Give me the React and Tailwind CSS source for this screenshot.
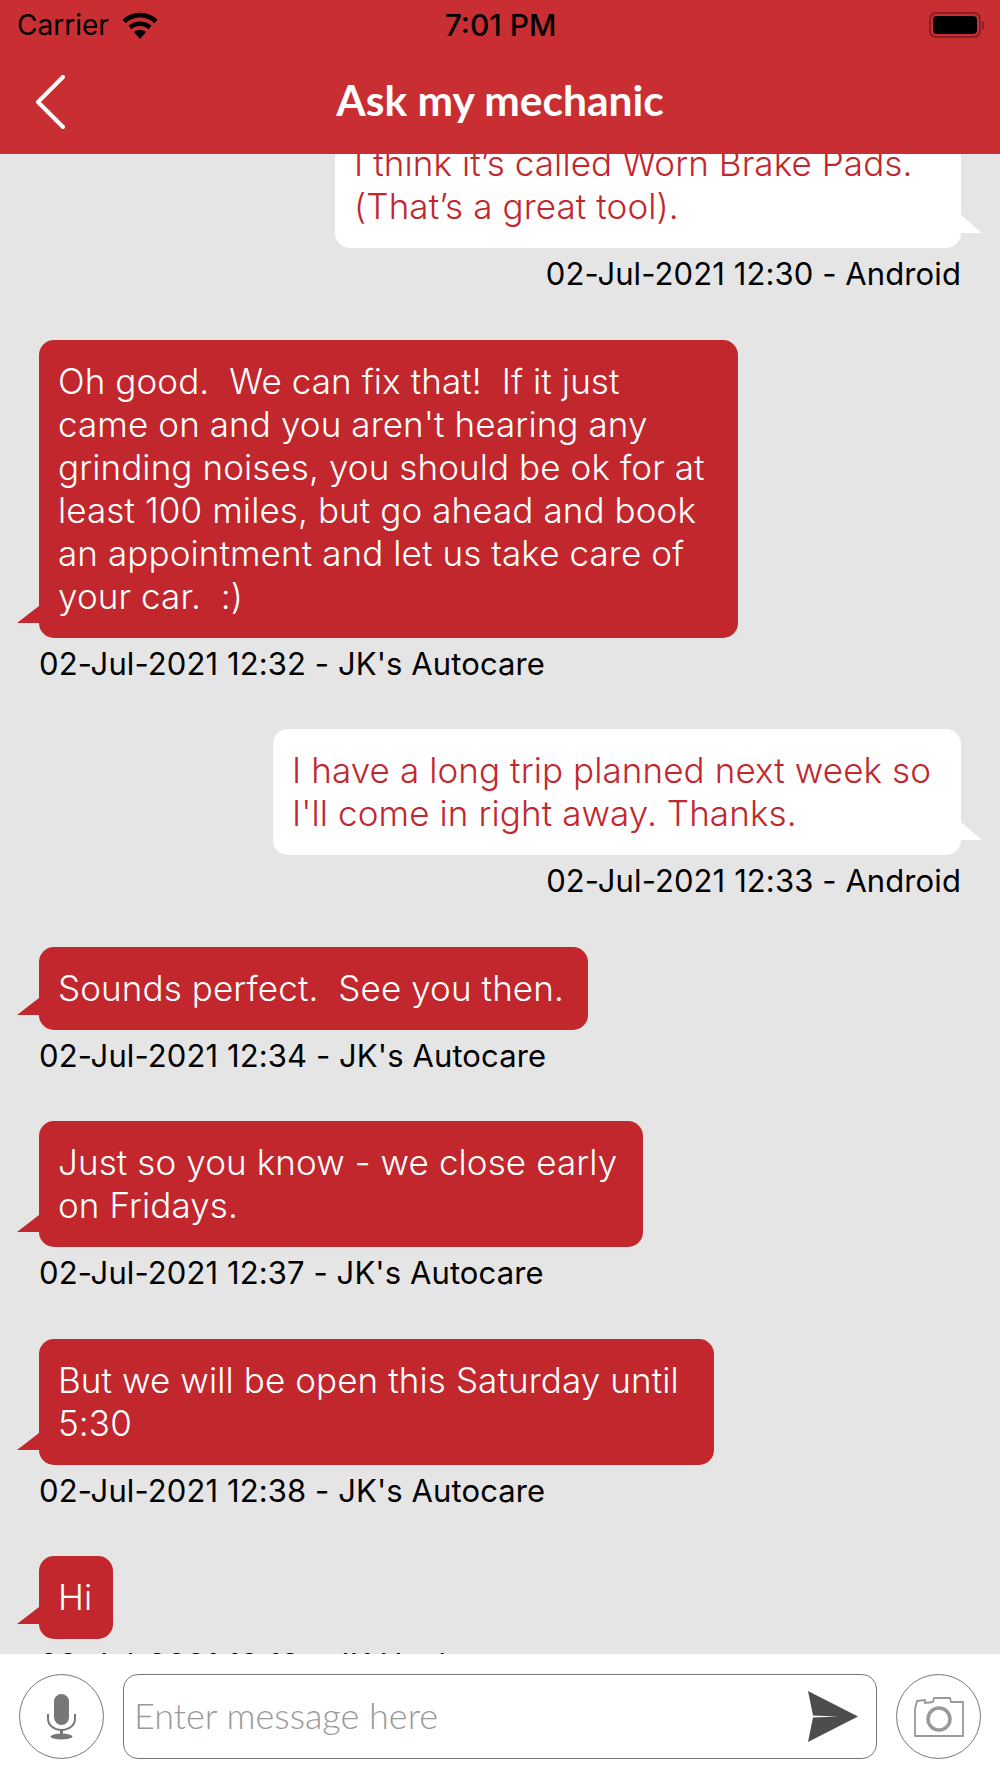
const MESSAGES = [
  { mine: true, width: 'w-[626px]', lines: ["I think it’s called Worn Brake Pads.", "(That’s a great tool)."], meta: '02-Jul-2021 12:30 - Android' },
  {
    width: 'w-[699px]',
    lines: [
      'Oh good.  We can fix that!  If it just',
      "came on and you aren't hearing any",
      'grinding noises, you should be ok for at',
      'least 100 miles, but go ahead and book',
      'an appointment and let us take care of',
      'your car.  :)',
    ],
    meta: "02-Jul-2021 12:32 - JK's Autocare",
  },
  { mine: true, width: 'w-[688px]', lines: ['I have a long trip planned next week so', "I'll come in right away. Thanks."], meta: '02-Jul-2021 12:33 - Android' },
  { width: 'w-[549px]', lines: ['Sounds perfect.  See you then.'], meta: "02-Jul-2021 12:34 - JK's Autocare" },
  { width: 'w-[604px]', lines: ['Just so you know - we close early', 'on Fridays.'], meta: "02-Jul-2021 12:37 - JK's Autocare" },
  { width: 'w-[675px]', lines: ['But we will be open this Saturday until', '5:30'], meta: "02-Jul-2021 12:38 - JK's Autocare" },
  { width: 'w-[74px]', lines: ['Hi'], meta: '02-Jul-2021 18:19 - JK Hanl' },
]

function Message({ mine, width, lines, meta }) {
  return (
    <div className={`mb-[47.500px] flex flex-col ${mine ? 'items-end' : 'items-start'}`}>
      <div className={`relative ${width} rounded-[15px] py-5 pr-5 pl-[19px] text-[35px] leading-[43px] font-[350] tracking-[0.1px] whitespace-pre ${mine ? 'bg-white text-[#c1272d]' : 'bg-[#c1272d] text-white'}`}>
        {lines.map((line) => (
          <div key={line}>{line}</div>
        ))}
        {mine ? (
          <svg className="absolute right-[-21px] bottom-[15px]" width="21" height="18" viewBox="0 0 21 18">
            <polygon points="0,0 21,18 0,18" fill="#ffffff" />
          </svg>
        ) : (
          <svg className="absolute left-[-22px] bottom-[15px]" width="22" height="17" viewBox="0 0 22 17">
            <polygon points="22,0 0,17 22,17" fill="#c1272d" />
          </svg>
        )}
      </div>
      <div className="mt-[8px] text-[31px] leading-[36px] tracking-[0.1px] text-black">{meta}</div>
    </div>
  )
}

function WifiIcon() {
  return (
    <svg width="36" height="27" viewBox="0 0 36 27" fill="none" stroke="#000" strokeWidth="4.6">
      <path d="M2 9.5C11 1 25 1 34 9.5" />
      <path d="M8 15.5C13.5 10.5 22.5 10.5 28 15.5" />
      <path d="M18 27l-6-7c3.5-2.6 8.5-2.6 12 0z" fill="#000" stroke="none" />
    </svg>
  )
}

function MicIcon() {
  return (
    <svg width="30" height="46" viewBox="0 0 30 46" fill="none">
      <rect x="7" y="0" width="15" height="31" rx="7.5" fill="#777" />
      <path d="M1 20v5c0 6 6 11 13.500 11S28 31 28 25v-5" stroke="#777" strokeWidth="2" />
      <path d="M14.500 36v6" stroke="#777" strokeWidth="3" />
      <ellipse cx="14.500" cy="42.500" rx="11" ry="3" fill="#777" />
    </svg>
  )
}

function SendIcon() {
  return (
    <svg width="50" height="51" viewBox="0 0 50 51">
      <polygon points="0,0 50,25.500 0,51 5,26.500 30,25.500 5,24.500" fill="#4d4d4d" />
    </svg>
  )
}

function CameraIcon() {
  return (
    <svg width="50" height="40" viewBox="0 0 50 40" fill="none" stroke="#999">
      <path d="M1 39V12L3 4l8-1v3l8-1 1-4h16l1 4h12v34z" strokeWidth="1.800" strokeLinejoin="round" />
      <circle cx="25" cy="22" r="11" strokeWidth="3.500" />
    </svg>
  )
}

export default function App() {
  return (
    <div className="flex h-[1778px] w-[1000px] flex-col overflow-hidden bg-[#e5e5e5] font-['Inter','Liberation_Sans',sans-serif]">
      <header className="relative z-10 h-[154px] shrink-0 bg-[#c92e33]">
        <div className="grid h-[50px] grid-cols-3 items-center pr-[16px] pl-[17px] text-black">
          <div className="flex items-center gap-[13px] text-[28px]">
            <span>Carrier</span>
            <WifiIcon />
          </div>
          <span className="text-center text-[30px] font-medium">7:01 PM</span>
          <div className="flex items-center justify-end">
            <div className="flex h-[26px] w-[52px] items-center rounded-[7px] border-2 border-[#8f1d22] p-[2px]">
              <div className="h-full w-full rounded-[4px] bg-black" />
            </div>
            <div className="ml-[1px] h-[9px] w-[2px] rounded-r bg-[#8f1d22]" />
          </div>
        </div>
        <div className="relative flex h-[104px] items-center justify-center pb-[4px]">
          <svg className="absolute top-[25px] left-[35px]" width="30" height="54" viewBox="0 0 30 54" fill="none" stroke="#fff" strokeWidth="4" strokeLinecap="round" strokeLinejoin="round">
            <path d="M28 2L3 27l25 25" />
          </svg>
          <h1 className="font-['Lato',sans-serif] text-[42.500px] leading-[46px] font-bold text-white">Ask my mechanic</h1>
        </div>
      </header>

      <main className="min-h-0 flex-1 overflow-hidden px-[39px]">
        <div className="-mt-[32px]">
          {MESSAGES.map((m) => (
            <Message key={m.meta} {...m} />
          ))}
        </div>
      </main>

      <footer className="flex h-[124px] shrink-0 items-center gap-[19px] bg-white px-[19px] pt-[1px]">
        <button type="button" className="flex h-[85px] w-[85px] shrink-0 items-center justify-center rounded-full border border-[#777]">
          <MicIcon />
        </button>
        <div className="flex h-[85px] flex-1 items-center justify-between rounded-[15px] border border-[#777] pr-[18px] pl-[10px]">
          <span className="mb-[4px] font-['Lato',sans-serif] text-[36px] font-light text-[#999999]">Enter message here</span>
          <SendIcon />
        </div>
        <button type="button" className="flex h-[85px] w-[85px] shrink-0 items-center justify-center rounded-full border border-[#777]">
          <CameraIcon />
        </button>
      </footer>
    </div>
  )
}
